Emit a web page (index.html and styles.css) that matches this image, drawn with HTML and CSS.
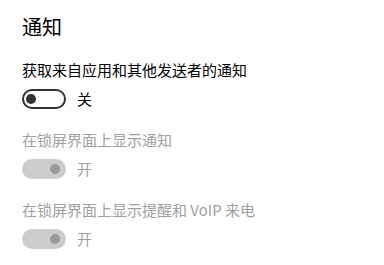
FILE: index.html
```html
<!DOCTYPE html>
<html lang="zh-CN">
  <head>
    <meta charset="UTF-8" />
    <meta name="viewport" content="width=device-width, initial-scale=1.0" />
    <title>通知</title>
    <link rel="stylesheet" href="styles.css">
  </head>
  <body>
    <div class="page">
      <h1 class="title">通知</h1>

      <div class="setting">
        <div class="label">获取来自应用和其他发送者的通知</div>
        <div class="switch-row">
          <span class="switch off"><span class="knob"></span></span>
          <span class="state">关</span>
        </div>
      </div>

      <div class="setting disabled">
        <div class="label">在锁屏界面上显示通知</div>
        <div class="switch-row">
          <span class="switch on"><span class="knob"></span></span>
          <span class="state">开</span>
        </div>
      </div>

      <div class="setting disabled">
        <div class="label">在锁屏界面上显示提醒和 VoIP 来电</div>
        <div class="switch-row">
          <span class="switch on"><span class="knob"></span></span>
          <span class="state">开</span>
        </div>
      </div>
    </div>
  </body>
</html>
```

FILE: styles.css
```css
* {
  margin: 0;
  padding: 0;
  box-sizing: border-box;
  font-family: "Noto Sans CJK SC", "Noto Sans", sans-serif;
}

body {
  background-color: #ffffff;
  color: #000000;
}

.page {
  display: flex;
  flex-direction: column;
  padding: 13px 22px 0 22px;
}

.title {
  font-size: 20px;
  font-weight: normal;
  line-height: 28px;
  margin-bottom: 19px;
}

.setting {
  display: flex;
  flex-direction: column;
  gap: 9px;
  margin-bottom: 21px;
}

.label {
  font-size: 15px;
  line-height: 20px;
}

.switch-row {
  display: flex;
  align-items: center;
  gap: 11px;
  height: 20px;
}

.switch {
  display: flex;
  align-items: center;
  width: 44px;
  height: 20px;
  border-radius: 10px;
  padding: 0 4px;
}

.switch .knob {
  width: 10px;
  height: 10px;
  border-radius: 50%;
}

.switch.off {
  border: 2px solid #333333;
  padding: 0 2px;
}

.switch.off .knob {
  background-color: #333333;
}

.switch.on {
  background-color: #cccccc;
  justify-content: flex-end;
  padding: 0 6px;
}

.switch.on .knob {
  background-color: #999999;
}

.state {
  font-size: 15px;
  line-height: 20px;
}

.disabled .label,
.disabled .state {
  color: #a0a0a0;
}
```
